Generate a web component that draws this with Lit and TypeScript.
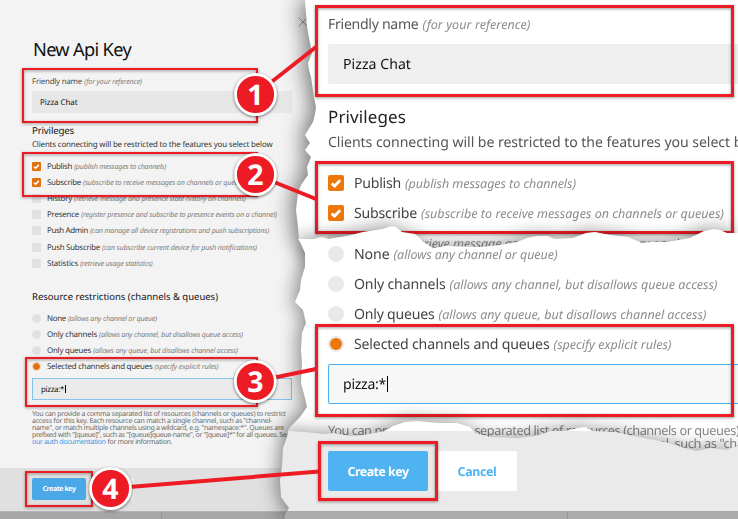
import { LitElement, html, css, svg } from "lit";
import { customElement, property } from "lit/decorators.js";
import { styleMap } from "lit/directives/style-map.js";

/** A run of text tracked out (or in) to a given advance width. */
@customElement("fit-text")
class FitText extends LitElement {
  @property() text = "";
  @property({ type: Number }) w = 0;
  static styles = css`
    :host { display: inline-block; white-space: pre; flex: none; padding-top: 1px; }
  `;
  render() {
    return html`<span>${this.text}</span>`;
  }
  firstUpdated() {
    if (!this.w) return;
    const span = this.renderRoot.querySelector("span")!;
    const natural = span.getBoundingClientRect().width;
    span.style.letterSpacing = `${(this.w - natural) / this.text.length}px`;
    this.style.width = `${this.w}px`;
  }
}

const t = (cls: string, text: string, w: number) =>
  html`<fit-text class=${cls} .text=${text} .w=${w}></fit-text>`;

const poly = (points: number[][]) =>
  `polygon(${points.map(([x, y]) => `${x}px ${y}px`).join(",")})`;

const sheetTop = poly([
  [305, 0], [306, 13], [307, 27], [310, 43], [312, 53], [308, 63], [309, 70], [311, 77], [314, 97], [316, 107],
  [315, 114], [313, 122], [305, 135], [310, 143], [305, 150], [311, 157], [307, 167], [308, 175], [301, 185],
  [298, 193], [296, 210], [298, 227], [299, 240], [312, 241], [316, 262], [738, 262], [738, 0],
]);
const sheetMiddle = poly([
  [298, 239], [314, 239], [322, 237], [328, 239], [347, 236], [363, 232], [382, 229], [392, 226], [396, 227],
  [402, 232], [415, 234], [425, 243], [433, 248], [446, 246], [480, 247], [500, 245], [517, 242], [527, 238],
  [537, 236], [547, 236], [555, 239], [573, 238], [586, 233], [595, 232], [610, 235], [628, 237], [642, 243],
  [652, 242], [667, 242], [690, 238], [704, 231], [714, 229], [720, 230], [727, 233], [738, 233], [738, 480],
  [310, 480], [300, 440], [288, 431], [290, 427], [300, 417], [307, 407], [305, 398], [301, 383], [302, 363],
  [301, 350], [302, 333], [306, 323], [303, 310], [295, 302], [300, 290], [301, 280], [305, 267], [305, 253],
  [300, 242],
]);
const sheetBottom = poly([
  [288, 431], [305, 432], [323, 434], [333, 433], [350, 436], [363, 435], [385, 431], [393, 426], [405, 422],
  [417, 421], [437, 423], [457, 423], [470, 427], [475, 433], [490, 437], [518, 438], [535, 436], [551, 431],
  [565, 431], [578, 428], [585, 427], [593, 431], [615, 432], [638, 437], [665, 442], [685, 448], [696, 451],
  [711, 448], [728, 450], [738, 446], [738, 519], [285, 519], [285, 515], [289, 508], [281, 497], [280, 480],
  [282, 467], [283, 448], [287, 437],
]);

const check = html`<svg class="tick" viewBox="0 0 16 16"><path d="M3.6 8.6 L6.6 11 L12.2 5.2" /></svg>`;

type Row = [string, number, string, number];
const privileges: Row[] = [
  ["Publish", 25, "(publish messages to channels)", 92],
  ["Subscribe", 34, "(subscribe to receive messages on channels or queues)", 164],
  ["History", 25, "(retrieve message and presence state history on channels)", 172],
  ["Presence", 32, "(register presence and subscribe to presence events on a channel)", 196],
  ["Push Admin", 41, "(can manage all device registrations and push subscriptions)", 179],
  ["Push Subscribe", 53, "(can subscribe current device for push notifications)", 155],
  ["Statistics", 31, "(retrieve usage statistics)", 72.5],
];
const bigPrivileges: Row[] = [
  ["Publish", 47, "(publish messages to channels)", 171],
  ["Subscribe", 63, "(subscribe to receive messages on channels or queues)", 303],
  ["History", 47, "(retrieve message and presence state history on channels)", 318],
];
const restrictions: Row[] = [
  ["None", 19, "(allows any channel or queue)", 89],
  ["Only channels", 50, "(allows any channel, but disallows queue access)", 144],
  ["Only queues", 44, "(allows any queue, but disallows channel access)", 145],
  ["Selected channels and queues", 105.5, "(specify explicit rules)", 64],
];
const bigRestrictions: Row[] = [
  ["None", 35.5, "(allows any channel or queue)", 164],
  ["Only channels", 91.5, "(allows any channel, but disallows queue access)", 268],
  ["Only queues", 80.5, "(allows any queue, but disallows channel access)", 268],
  ["Selected channels and queues", 195.5, "(specify explicit rules)", 118],
];

const rows = (list: Row[], kind: "box" | "dot", on: (i: number) => boolean) =>
  list.map(
    ([name, nw, note, w], i) => html`<div class="row">
      <i class="${kind} ${on(i) ? "on" : ""}">${kind === "box" && on(i) ? check : ""}</i>
      <div class="pair">${t("name", name, nw)}${t("note", note, w)}</div>
    </div>`
  );

// Callout frames: x, y, width, height
const smallFrames = [[22, 68, 236, 55], [22, 152, 236, 45], [25, 357, 233, 50], [25, 471, 68, 36]];
const frame = (cls: string, [x, y, w, h]: number[]) =>
  html`<div class="frame ${cls}" style=${styleMap({ left: `${x}px`, top: `${y}px`, width: `${w}px`, height: `${h}px` })}></div>`;

// Numbered markers: centre, and the point the lead line runs to
const markers = [
  [255.5, 94.5, 316, 47], [255.5, 174.5, 316, 199], [255.3, 381.5, 316, 369], [110.5, 488.5, 319, 471.5],
];

@customElement("app-root")
class AppRoot extends LitElement {
  static styles = css`
    :host {
      display: block; position: relative; width: 738px; height: 519px; overflow: hidden;
      background: #f3f3f3; color: #444; font-family: "Noto Sans", "Open Sans", sans-serif;
      text-rendering: geometricPrecision;
    }
    * { box-sizing: border-box; }
    fit-text { line-height: inherit; }
    .note { font-style: italic; color: #8d8d8d; }
    .pair { display: flex; align-items: baseline; }
    .row { display: flex; align-items: center; }
    .box, .dot { flex: none; display: block; background: #e1e1e1; }
    .dot { border-radius: 50%; }
    .box.on { background: #e5700b; }
    .tick { display: block; width: 100%; height: 100%; fill: none; stroke: #fff; stroke-width: 2.9; }
    .field { display: flex; align-items: center; color: #111; }
    .caret { background: #000; width: 1px; }

    .small { display: flex; flex-direction: column; width: 330px; height: 519px; font-size: 7.9px; line-height: 12px; }
    .small .body { height: 468px; flex: none; padding: 37px 0 0 32px; position: relative; }
    .small .pair { gap: 2px; }
    .small .note { font-size: 7.2px; color: #808080; }
    .title { font-size: 18.2px; line-height: 24px; height: 24px; color: #111; padding-left: 1px; }
    .small .label { height: 12px; margin-top: 14px; color: #4a4a4a; }
    .small .field { width: 260px; height: 22px; margin-top: 4px; padding-left: 8px; background: #e7e7e7; }
    .small h2 { margin: 10px 0 0; font: inherit; font-size: 9.7px; line-height: 14px; height: 14px; color: #111; }
    .small .lead { height: 12px; margin-top: 1px; color: #333; }
    .small .list { margin-top: 8px; }
    .small .row { height: 16.2px; gap: 6px; color: #333; }
    .small .box, .small .dot { width: 9px; height: 9px; }
    .small .row .box { border-radius: 1px; }
    .small .dot.on { background: #e5700b; border: 1.5px solid #e6e6e6; }
    .small h2.res { margin-top: 18px; font-size: 9.5px; }
    .small h2.res + .list { margin-top: 7px; }
    .small .focus { border: 1px solid #83c4ea; background: #ebebeb; margin-top: 3px; }
    .small .caret { height: 8px; margin-left: 1px; }
    .small .help { margin-top: 9.5px; font-size: 7px; line-height: 7.2px; color: #6c6c6c; }
    .small .help > div { height: 7.2px; display: flex; gap: 2px; }
    .link { color: #2f9be3; }
    .close { position: absolute; left: 298px; top: 17px; width: 10px; height: 10px; stroke: #888; stroke-width: 0.8; }
    .small .foot { height: 43px; padding: 10px 0 0 32px; display: flex; background: #e0e0e0; }
    .small .btn { width: 54px; height: 22px; font-size: 7px; background: #4ba8e6; }
    .small .cancel { width: 40px; height: 22px; margin-left: 8px; background: #ececec; }
    .btn { display: flex; align-items: center; justify-content: center; font-weight: 700; color: #fff; border-radius: 2px; }
    .bar { flex: 1; background: #a6a6a6; border-top: 1px solid #b4b4b4; display: flex; }
    .bar::after { content: ""; border-left: 1px solid #999; margin-left: 161px; }

    .lift { position: absolute; inset: 0; filter: drop-shadow(-5px 0 10px rgba(0, 0, 0, 0.5)); }
    .lift.over { filter: drop-shadow(-4px -1px 9px rgba(0, 0, 0, 0.42)); }
    .sheet { height: 519px; padding-left: 328px; background: #fff; font-size: 14.1px; line-height: 20px; position: relative; overflow: hidden; }
    .sheet .note { font-size: 12.5px; }
    .sheet .pair { gap: 4px; }
    .sheet .label { padding-top: 14px; height: 44px; color: #555; }
    .sheet .field { width: 440px; height: 40px; padding-left: 15px; background: #efefef; border-radius: 2px; }
    .sheet h2 { margin: 20px 0 0; font: inherit; font-size: 17px; line-height: 24px; height: 24px; color: #222; }
    .sheet .lead { margin-top: 4px; height: 20px; color: #555; }
    .sheet .list { margin-top: 16px; }
    .sheet .row { height: 30px; gap: 10px; }
    .sheet .box, .sheet .dot { width: 16px; height: 16px; border-radius: 2px; background: #e9e9e9; }
    .sheet .dot { border-radius: 50%; }
    .sheet .box.on { background: #ee770b; }
    .sheet .dot.on { background: #ee770b; border: 2.5px solid #e9e9e9; }
    .mid .list { margin-top: 0; padding-top: 239px; }
    .sheet .focus { margin-top: 5px; border: 1px solid #4eaee9; background: #f7f7f7; padding-left: 14px; }
    .sheet .caret { height: 16px; margin-left: 1px; }
    .sheet .help { margin-top: 19px; line-height: 13px; color: #888; font-size: 12.8px; }
    .sheet .help > div { height: 13px; }
    .end { background: linear-gradient(#fff 431px, #eaeaea 431px); padding: 451px 0 0; display: flex; flex-direction: column; }
    .end .actions { display: flex; gap: 9px; padding-left: 328px; height: 60px; flex: none; }
    .end .btn { width: 100px; height: 40px; background: #50b3f1; font-size: 12.4px; }
    .end .cancel { width: 80px; background: #fff; color: #50b3f1; }
    .end .bar { background: #ababab; border-color: #a8a8a8; }
    .end .bar::after { margin-left: 567px; }

    .frame { position: absolute; border: 3px solid #ed1c24; filter: drop-shadow(0 1px 1.5px rgba(0, 0, 0, 0.4)); }
    .frame.thin { border-width: 2px; }
    .marks { position: absolute; inset: 0; width: 738px; height: 519px; }
    .marks line { stroke: #ed1c24; stroke-width: 4; }
    .marks circle { fill: #ed1c24; stroke: #fff; stroke-width: 2.8; filter: drop-shadow(0 1px 1.5px rgba(0, 0, 0, 0.55)); }
    .marks text { fill: #fff; font-size: 28.5px; font-weight: 700; text-anchor: middle; }
  `;

  render() {
    return html`
      <div class="small">
        <div class="body">
          <svg class="close" viewBox="0 0 10 10"><path d="M.5 .5 L9.5 9.5 M9.5 .5 L.5 9.5" /></svg>
          <div class="title">${t("", "New Api Key", 98)}</div>
          <div class="label pair">${t("", "Friendly name", 50)}${t("note", "(for your reference)", 58)}</div>
          <div class="field">${t("", "Pizza Chat", 37.5)}</div>
          <h2>${t("", "Privileges", 42)}</h2>
          <div class="lead">${t("", "Clients connecting will be restricted to the features you select below", 240.5)}</div>
          <div class="list">${rows(privileges, "box", (i) => i < 2)}</div>
          <h2 class="res">${t("", "Resource restrictions (channels & queues)", 186)}</h2>
          <div class="list">${rows(restrictions, "dot", (i) => i === 3)}</div>
          <div class="field focus">${t("", "pizza:*", 23)}<i class="caret"></i></div>
          <div class="help">
            <div>${t("", "You can provide a comma separated list of resources (channels or queues) to restrict", 253.5)}</div>
            <div>${t("", 'access for this key. Each resource can match a single channel, such as "channel-', 240)}</div>
            <div>${t("", 'name", or match multiple channels using a wildcard, e.g. "namespace:*". Queues are', 252)}</div>
            <div>${t("", 'prefixed with "[queue]", such as "[queue]queue-name", or "[queue]*" for all queues. See', 258)}</div>
            <div>${t("link", "our auth documentation", 73.5)}${t("", "for more information.", 64.5)}</div>
          </div>
        </div>
        <div class="foot">
          <div class="btn">${t("", "Create key", 33)}</div>
          <div class="cancel"></div>
        </div>
        <div class="bar"></div>
      </div>
      ${smallFrames.map((f) => frame("thin", f))}

      <div class="lift">
        <div class="sheet" style=${styleMap({ clipPath: sheetTop })}>
          <div class="label pair">${t("", "Friendly name", 90.5)}${t("note", "(for your reference)", 108)}</div>
          <div class="field">${t("", "Pizza Chat", 68)}</div>
          <h2>${t("", "Privileges", 78)}</h2>
          <div class="lead">${t("", "Clients connecting will be restricted to the features you select below", 445)}</div>
          <div class="list">${rows(bigPrivileges, "box", (i) => i < 2)}</div>
          ${frame("", [315, 5, 419, 92])} ${frame("", [315, 161, 419, 73])}
        </div>
      </div>

      <div class="lift over">
        <div class="sheet mid" style=${styleMap({ clipPath: sheetMiddle })}>
          <div class="list">${rows(bigRestrictions, "dot", (i) => i === 3)}</div>
          <div class="field focus">${t("", "pizza:*", 43)}<i class="caret"></i></div>
          <div class="help">
            <div>${t("", "You can provide a comma separated list of resources (channels or queues) to restrict", 467)}</div>
            <div>${t("", 'access for this key. Each resource can match a single channel, such as "channel-', 444)}</div>
          </div>
          ${frame("", [315, 324, 419, 93])}
        </div>
      </div>

      <div class="lift over">
        <div class="sheet end" style=${styleMap({ clipPath: sheetBottom })}>
          <div class="actions">
            <div class="btn">${t("", "Create key", 61)}</div>
            <div class="btn cancel">${t("", "Cancel", 39)}</div>
          </div>
          <div class="bar"></div>
          ${frame("", [318, 441, 120, 60])}
        </div>
      </div>

      <svg class="marks" viewBox="0 0 738 519">
        ${markers.map(
          ([x, y, tx, ty], i) => svg`
            <line x1=${x} y1=${y} x2=${tx} y2=${ty} />
            <circle cx=${x} cy=${y} r="20" />
            <text x=${x} y=${y + 10.3}>${i + 1}</text>`
        )}
      </svg>
    `;
  }
}
